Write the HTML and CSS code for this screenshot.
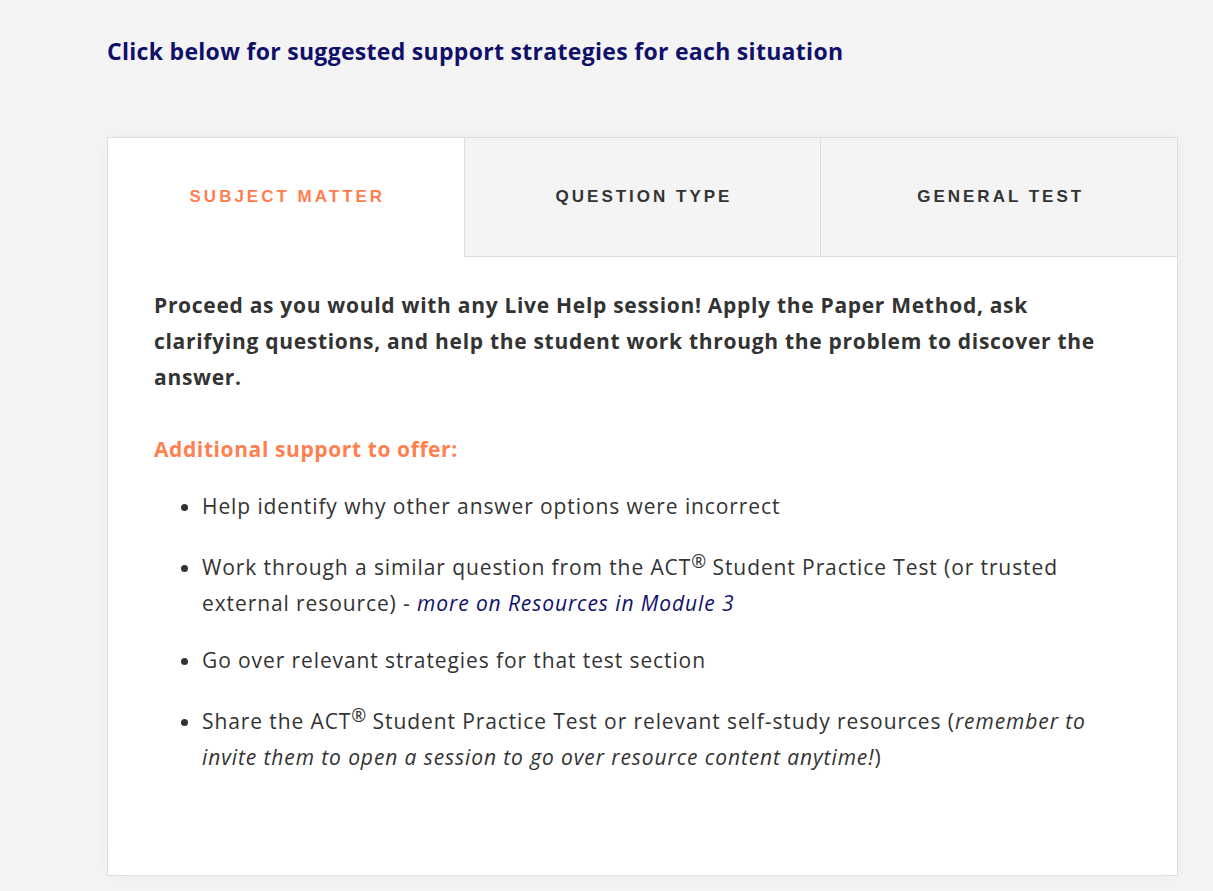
FILE: index.html
```html
<!DOCTYPE html>
<html lang="en">
<head>
<meta charset="utf-8">
<title>Support strategies</title>
<link rel="stylesheet" href="styles.css">
</head>
<body>
<main class="page">
  <h2 class="intro">Click below for suggested support strategies for each situation</h2>
  <section class="card">
    <div class="tabs">
      <div class="tab active">SUBJECT MATTER</div>
      <div class="tab">QUESTION TYPE</div>
      <div class="tab">GENERAL TEST</div>
    </div>
    <div class="panel">
      <p class="lead">Proceed as you would with any Live Help session! Apply the Paper Method, ask clarifying questions, and help the student work through the problem to discover the answer.</p>
      <h3 class="sub">Additional support to offer:</h3>
      <ul class="list">
        <li>Help identify why other answer options were incorrect</li>
        <li>Work through a similar question from the ACT<sup>®</sup> Student Practice Test (or trusted external resource) - <a class="link" href="#">more on Resources in Module 3</a></li>
        <li>Go over relevant strategies for that test section</li>
        <li>Share the ACT<sup>®</sup> Student Practice Test or relevant self-study resources (<em>remember to invite them to open a session to go over resource content anytime!</em>)</li>
      </ul>
    </div>
  </section>
</main>
</body>
</html>
```

FILE: styles.css
```css
* { box-sizing: border-box; }
html, body { margin: 0; padding: 0; }
body {
  background: #f4f4f4;
  font-family: "Open Sans", "Noto Sans", sans-serif;
  color: #333;
}
.page {
  padding: 36px 0 14px 107px;
  width: 1178px;
}
.intro {
  margin: 0;
  font-size: 23px;
  line-height: 30px;
  font-weight: 700;
  letter-spacing: 0.3px;
  color: #10106b;
}
.card {
  margin-top: 71px;
  background: #fff;
  border: 1px solid #ddd;
  box-shadow: 0 0 18px rgba(0,0,0,0.04);
}
.tabs {
  display: flex;
}
.tab {
  flex: 1;
  height: 119px;
  display: flex;
  align-items: center;
  justify-content: center;
  padding-left: 3px;
  background: #f4f4f4;
  border-left: 1px solid #ddd;
  border-bottom: 1px solid #ddd;
  font-family: "Liberation Sans", Arial, sans-serif;
  font-weight: 700;
  font-size: 17px;
  letter-spacing: 3px;
  color: #333;
}
.tab:first-child { border-left: none; }
.tab.active {
  background: #fff;
  border-bottom-color: #fff;
  color: #ff7f50;
}
.panel {
  padding: 30px 46px 100px 46px;
}
.lead {
  margin: 0 0 36px;
  font-size: 21px;
  line-height: 36px;
  font-weight: 700;
  letter-spacing: 0.7px;
}
.sub {
  margin: 0 0 21px;
  font-size: 21px;
  line-height: 36px;
  font-weight: 700;
  letter-spacing: 0.6px;
  color: #ff7f50;
}
.list {
  margin: 0;
  padding-left: 48px;
}
.list li {
  font-size: 21px;
  line-height: 36px;
  letter-spacing: 0.9px;
  margin-bottom: 21px;
}
.list li:last-child { margin-bottom: 0; }
.list sup {
  font-size: 18px;
  line-height: 32px;
  letter-spacing: 0;
  vertical-align: 7px;
}
.link {
  color: #10106b;
  font-style: italic;
  text-decoration: none;
}
```
